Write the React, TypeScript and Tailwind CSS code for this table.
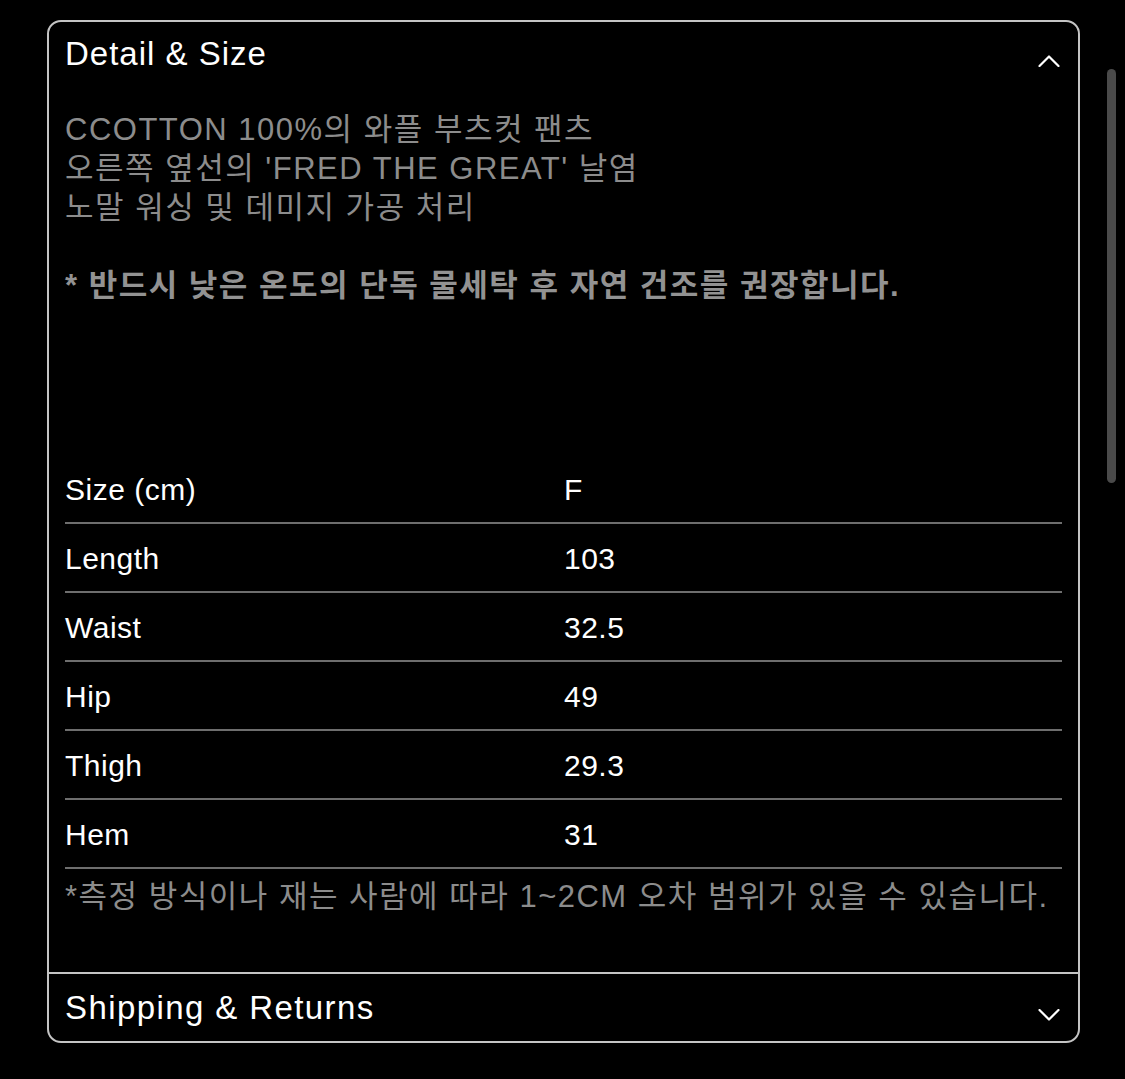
// 사이즈 표 데이터
const sizeRows = [
  { label: "Size (cm)", value: "F" },
  { label: "Length", value: "103" },
  { label: "Waist", value: "32.5" },
  { label: "Hip", value: "49" },
  { label: "Thigh", value: "29.3" },
  { label: "Hem", value: "31" },
]

const font = { fontFamily: '"Liberation Sans", "Noto Sans CJK KR", sans-serif' }

function Chevron({ up }: { up?: boolean }) {
  return (
    <svg width="22" height="12" viewBox="0 0 22 12" className="mt-[14px] mr-[2px]" fill="none">
      <path
        d={up ? "M1.5 11 L11 1.5 L20.5 11" : "M1.5 1 L11 10.5 L20.5 1"}
        stroke="white"
        strokeWidth="2.2"
        strokeLinecap="round"
        strokeLinejoin="round"
      />
    </svg>
  )
}

export default function App() {
  return (
    <main className="relative min-h-screen bg-black pt-5 pl-[47px]" style={font}>
      {/* Barra de rolagem */}
      <div className="absolute left-[1107px] top-[69px] h-[414px] w-[9px] rounded-full bg-[#4a4a4a]" />

      <div className="w-[1033px] rounded-[14px] border-2 border-[#c4c4c4] bg-black">
        {/* Detail & Size */}
        <section className="border-b-2 border-[#c4c4c4] px-4 pb-[56px]">
          <div className="flex items-center justify-between pt-3">
            <h2 className="text-[33px] leading-[40px] tracking-[1px] text-white">Detail &amp; Size</h2>
            <Chevron up />
          </div>

          <p className="mt-[36px] text-[31px] leading-[39px] tracking-[1.5px] text-[#8c8c8c]">
            CCOTTON 100%의 와플 부츠컷 팬츠
            <br />
            오른쪽 옆선의 'FRED THE GREAT' 날염
            <br />
            노말 워싱 및 데미지 가공 처리
          </p>
          <p className="mt-[39px] text-[31px] font-bold leading-[39px] tracking-[1.5px] text-[#929292]">
            * 반드시 낮은 온도의 단독 물세탁 후 자연 건조를 권장합니다.
          </p>

          <div className="mt-[150px]">
            {sizeRows.map((row) => (
              <div
                key={row.label}
                className="flex h-[69px] items-center border-b-2 border-[#6e6e6e] pt-[2px] text-[30px] tracking-[0.5px] text-white"
              >
                <span className="w-[499px]">{row.label}</span>
                <span>{row.value}</span>
              </div>
            ))}
          </div>

          <p className="mt-[8px] text-[31px] leading-[39px] tracking-[1.5px] text-[#8c8c8c]">
            *측정 방식이나 재는 사람에 따라 1~2CM 오차 범위가 있을 수 있습니다.
          </p>
        </section>

        {/* Shipping & Returns */}
        <section className="flex h-[67px] items-center justify-between px-4">
          <h2 className="text-[33px] leading-[40px] tracking-[1.4px] text-white">Shipping &amp; Returns</h2>
          <Chevron />
        </section>
      </div>
    </main>
  )
}
